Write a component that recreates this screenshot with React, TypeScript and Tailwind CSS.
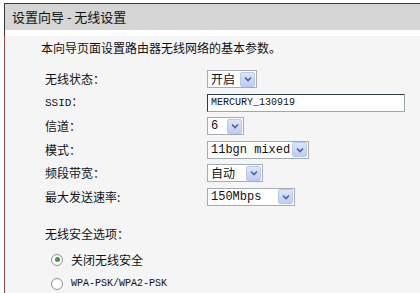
import React from 'react';

const cjk = { fontFamily: '"SimSun", "Noto Sans CJK SC", sans-serif' };
const mono = { fontFamily: '"Liberation Mono", "Noto Sans CJK SC", monospace' };

function Arrow() {
  return (
    <span className="flex h-[15px] w-[15px] items-center justify-center rounded-[2px] border border-[#b7c8ee] bg-gradient-to-b from-[#dce6fb] to-[#bccdf5]">
      <svg width="8" height="6" viewBox="0 0 8 6">
        <path d="M1 1.5 L4 4.5 L7 1.5" fill="none" stroke="#4a5f8a" strokeWidth="1.6" />
      </svg>
    </span>
  );
}

function Select({ value, width, isMono }: { value: string; width: string; isMono?: boolean }) {
  return (
    <div className={`flex h-[18px] items-center justify-between border border-[#a5acb5] bg-white pl-[3px] pr-[1px] ${width}`}>
      <span className="text-[12px] leading-none text-[#111]" style={isMono ? mono : cjk}>
        {value}
      </span>
      <Arrow />
    </div>
  );
}

function Row({ label, children, labelMono }: { label: string; children: React.ReactNode; labelMono?: boolean }) {
  return (
    <div className="flex h-[23.5px] items-center">
      <div className={`w-[162px] text-[#111] ${labelMono ? 'text-[11px]' : 'text-[12px]'}`} style={labelMono ? mono : cjk}>
        {label}
      </div>
      {children}
    </div>
  );
}

function Radio({ checked, label, labelMono }: { checked?: boolean; label: string; labelMono?: boolean }) {
  return (
    <div className="flex h-[24px] items-center pl-[6px]">
      <span className="flex h-[12px] w-[12px] items-center justify-center rounded-full border border-[#8a9199] bg-white">
        {checked && <span className="h-[5px] w-[5px] rounded-full bg-[#3b9a3b]" />}
      </span>
      <span className={`ml-[8px] text-[#111] ${labelMono ? 'text-[10px]' : 'text-[12px]'}`} style={labelMono ? mono : cjk}>
        {label}
      </span>
    </div>
  );
}

export default function App() {
  return (
    <div className="h-[293px] w-[420px] overflow-hidden bg-white pl-[4px] pt-[3px]">
      <div className="h-full border-l border-t border-[#3a3a3a]">
        {/* header */}
        <div className="flex h-[26px] items-center bg-[#d5d5d5] pl-[7px] text-[13px] text-[#111]" style={cjk}>
          设置向导 - 无线设置
        </div>

        {/* body */}
        <div className="h-full border-l border-[#9b4b4b] bg-[#f5f5f5] -ml-px">
          <div className="mt-[6px] flex h-[24px] items-center pl-[36px] text-[12px] text-[#111]" style={cjk}>
            本向导页面设置路由器无线网络的基本参数。
          </div>

          <div className="mt-[7.5px] pl-[40px]">
            <Row label="无线状态：">
              <Select value="开启" width="w-[50px]" />
            </Row>
            <Row label="SSID：" labelMono>
              <div className="flex h-[18px] w-[198px] items-center border border-[#2d3a40] border-b-[#9aa] border-r-[#9aa] bg-white pl-[3px] text-[10px] text-[#111]" style={mono}>
                MERCURY_130919
              </div>
            </Row>
            <Row label="信道：">
              <Select value="6" width="w-[37px]" isMono />
            </Row>
            <Row label="模式：">
              <Select value="11bgn mixed" width="w-[102px]" isMono />
            </Row>
            <Row label="频段带宽：">
              <Select value="自动" width="w-[56px]" />
            </Row>
            <Row label="最大发送速率:">
              <Select value="150Mbps" width="w-[88px]" isMono />
            </Row>

            <div className="mt-[13px] flex h-[24px] items-center text-[12px] text-[#111]" style={cjk}>
              无线安全选项：
            </div>
            <div className="mt-[2px]">
              <Radio checked label="关闭无线安全" />
              <Radio label="WPA-PSK/WPA2-PSK" labelMono />
            </div>
          </div>
        </div>
      </div>
    </div>
  );
}
